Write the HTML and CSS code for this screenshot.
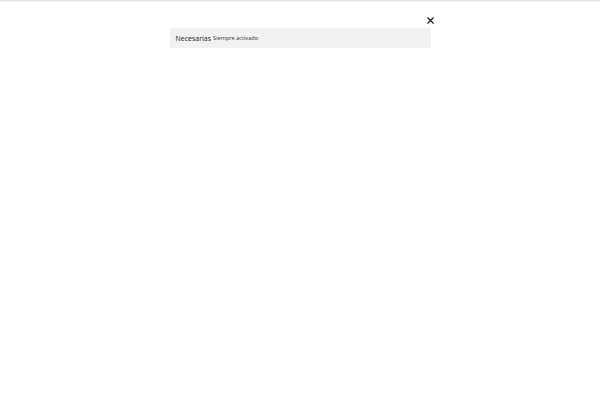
FILE: index.html
```html
<!DOCTYPE html>
<html lang="es">
<head>
    <meta charset="UTF-8">
    <meta name="viewport" content="width=device-width, initial-scale=1.0">
    <title>Preferencias</title>
    <link rel="stylesheet" href="styles.css">
</head>
<body>
    <div class="topbar"></div>
    <div class="modal">
        <div class="modal-head">
            <button class="close" aria-label="Cerrar">
                <svg width="7" height="7" viewBox="0 0 7 7">
                    <path d="M0.5 0.5L6.5 6.5M6.5 0.5L0.5 6.5" stroke="#1a1a1a" stroke-width="1.2" fill="none"/>
                </svg>
            </button>
        </div>
        <div class="category">
            <span class="cat-title">Necesarias</span>
            <span class="cat-status">Siempre activado</span>
        </div>
    </div>
</body>
</html>
```

FILE: styles.css
```css
body {
    margin: 0;
    background-color: #fff;
    font-family: "Open Sans", sans-serif;
    color: #222;
}

.topbar {
    height: 1px;
    background-color: #e6e6e6;
    box-shadow: 0 1px 1px #f2f2f2;
}

.modal {
    width: 261px;
    margin: 0 auto;
    padding-top: 16px;
}

.modal-head {
    display: flex;
    justify-content: flex-end;
    height: 11px;
}

.close {
    border: none;
    background: none;
    padding: 0;
    margin-right: -3px;
    width: 7px;
    height: 7px;
    display: flex;
}

.category {
    background-color: #f1f1f1;
    height: 20px;
    display: flex;
    align-items: center;
    padding: 0 6px;
    gap: 2px;
    white-space: nowrap;
}

.cat-title {
    font-size: 7px;
    color: #222;
}

.cat-status {
    font-size: 5.6px;
    color: #333;
}
```
